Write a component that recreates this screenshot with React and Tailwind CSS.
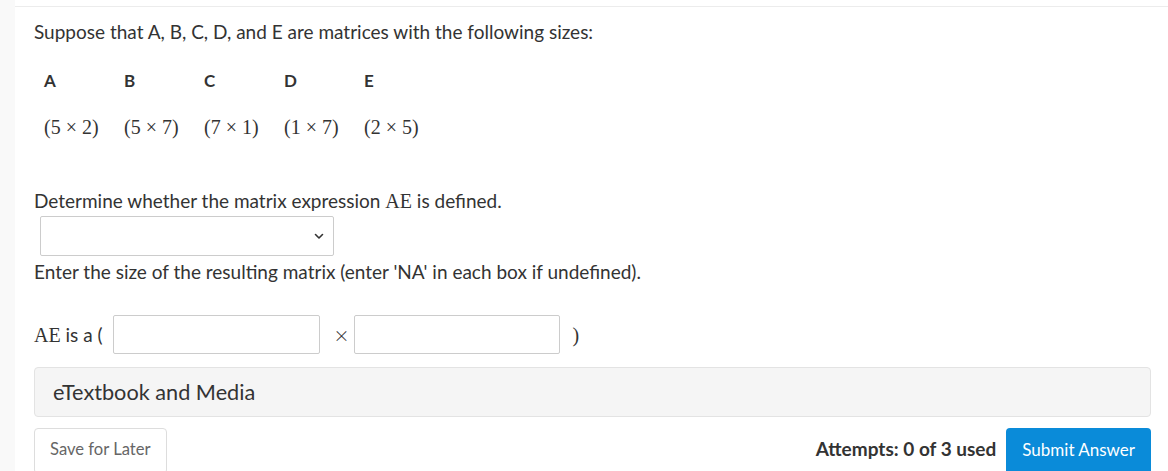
import React from "react";

const sizes = [
  ["A", "5", "2"],
  ["B", "5", "7"],
  ["C", "7", "1"],
  ["D", "1", "7"],
  ["E", "2", "5"],
];

function Chevron() {
  return (
    <svg width="12" height="12" viewBox="0 0 12 12" fill="none" stroke="#333" strokeWidth="1.6" strokeLinecap="round" strokeLinejoin="round">
      <path d="M2.5 4.5 6 8l3.5-3.5" />
    </svg>
  );
}

export default function App() {
  return (
    <div className="flex h-[471px] w-[1168px] overflow-hidden bg-white text-[#333] font-['Lato','Open_Sans',sans-serif]">
      <div className="w-[15px] shrink-0 bg-[#f9f9f9]" />
      <div className="flex-1 pt-[6px]">
        <div className="border-t border-[#ececec] pl-[19px] pr-[17px]">
          <p className="mt-[14px] text-[19px] leading-[22px]">Suppose that A, B, C, D, and E are matrices with the following sizes:</p>

          <div className="mt-[28px] flex pl-[10px]">
            {sizes.map(([n, r, c]) => (
              <div key={n} className="w-[80px]">
                <div className="text-[17px] font-bold leading-[20px]">{n}</div>
                <div className="mt-[26px] whitespace-nowrap font-['Liberation_Serif',serif] text-[20px] leading-[20px]">
                  ({r}<span className="mx-[5px]">×</span>{c})
                </div>
              </div>
            ))}
          </div>

          <p className="mt-[53px] text-[19px] leading-[22px]">
            Determine whether the matrix expression <span className="font-['Liberation_Serif',serif] text-[20px]">AE</span> is defined.
          </p>

          <div className="ml-[6px] mt-[4px] flex h-[40px] w-[294px] items-center justify-end rounded-[2px] border border-[#ccc] bg-white pr-[8px]">
            <Chevron />
          </div>

          <p className="mt-[5px] text-[19px] leading-[22px]">Enter the size of the resulting matrix (enter 'NA' in each box if undefined).</p>

          <div className="mt-[32px] flex h-[39px] items-center">
            <span className="text-[19px]">
              <span className="font-['Liberation_Serif',serif] text-[20px]">AE</span> is a (
            </span>
            <input className="ml-[10px] h-[39px] w-[207px] rounded-[2px] border border-[#ccc] bg-white" />
            <span className="ml-[15px] mr-[5px] text-[24px] font-light leading-none">×</span>
            <input className="h-[39px] w-[206px] rounded-[2px] border border-[#ccc] bg-white" />
            <span className="ml-[13px] font-['Liberation_Serif',serif] text-[20px]">)</span>
          </div>

          <div className="mt-[13px] flex h-[50px] items-center rounded-[4px] border border-[#e3e3e3] bg-[#f5f5f5] px-[18px] text-[21.7px]">
            eTextbook and Media
          </div>

          <div className="mt-[11px] flex items-start justify-between">
            <button className="h-[46px] rounded-[4px] border border-[#ddd] bg-white px-[15px] pb-[3px] text-[16.6px] text-[#666]">Save for Later</button>
            <div className="flex items-start">
              <span className="mt-[7px] text-[19px] font-bold">Attempts: 0 of 3 used</span>
              <button className="ml-[10px] h-[46px] rounded-[4px] bg-[#0a8bd9] px-[16px] pb-[3px] text-[17px] text-white">Submit Answer</button>
            </div>
          </div>
        </div>
      </div>
    </div>
  );
}
